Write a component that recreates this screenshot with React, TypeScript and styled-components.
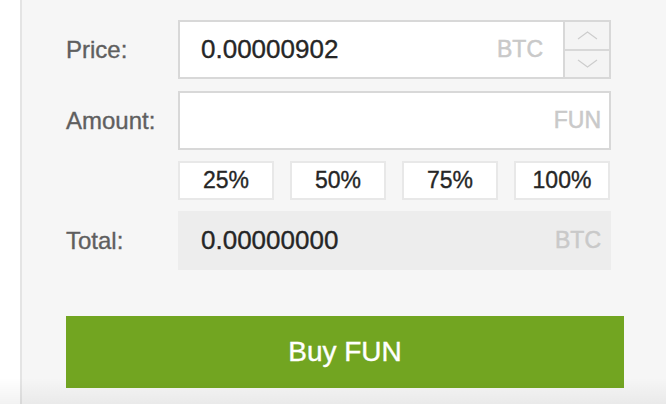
import React from "react";
import styled, { createGlobalStyle } from "styled-components";

const Global = createGlobalStyle`
  html, body { margin: 0; padding: 0; background: #ffffff; }
  body { font-family: "Liberation Sans", Arial, sans-serif; overflow: hidden; }
  * { box-sizing: border-box; }
`;

const Page = styled.div`
  display: flex;
  height: 404px;
  position: relative;
  &::after {
    content: "";
    position: absolute;
    left: 0;
    right: 0;
    bottom: 0;
    height: 26px;
    background: linear-gradient(to bottom, rgba(0,0,0,0), rgba(0,0,0,0.05));
    pointer-events: none;
  }
`;

const Gutter = styled.div`
  width: 20px;
  flex: none;
  background: #ffffff;
`;

const Panel = styled.div`
  flex: 1;
  background: #f6f6f6;
  border-left: 2px solid #e4e4e4;
  padding: 20px 42px 0 44px;
  display: flex;
  flex-direction: column;
`;

const Row = styled.div<{ $gap?: number }>`
  display: grid;
  grid-template-columns: 112px 433px;
  align-items: center;
  margin-bottom: ${(p) => p.$gap ?? 11}px;
`;

const Label = styled.div`
  font-size: 24px;
  color: #5f5f5f;
  -webkit-text-stroke: 0.35px currentColor;
`;

const Field = styled.div<{ $filled?: boolean }>`
  height: 59px;
  display: flex;
  align-items: stretch;
  background: ${(p) => (p.$filled ? "#ededed" : "#ffffff")};
  border: ${(p) => (p.$filled ? "none" : "2px solid #d8d8d8")};
`;

const Value = styled.div<{ $pad: number; $left: number }>`
  flex: 1;
  display: flex;
  align-items: center;
  justify-content: space-between;
  padding: 0 ${(p) => p.$pad}px 0 ${(p) => p.$left}px;
`;

const Num = styled.span`
  font-size: 26px;
  color: #262626;
  -webkit-text-stroke: 0.35px currentColor;
`;

const Unit = styled.span`
  font-size: 23px;
  color: #c9c9c9;
  -webkit-text-stroke: 0.5px currentColor;
`;

const Spinner = styled.div`
  width: 46px;
  flex: none;
  display: flex;
  flex-direction: column;
  border-left: 2px solid #d8d8d8;
  background: #f4f4f4;
`;

const SpinBtn = styled.div<{ $top?: boolean }>`
  flex: 1;
  display: flex;
  align-items: center;
  justify-content: center;
  border-bottom: ${(p) => (p.$top ? "2px solid #d8d8d8" : "none")};
`;

const Percents = styled.div`
  grid-column: 2;
  display: grid;
  grid-template-columns: repeat(4, 96px);
  gap: 16px;
`;

const PctBtn = styled.div`
  height: 39px;
  background: #ffffff;
  border: 2px solid #e8e8e8;
  display: flex;
  align-items: center;
  justify-content: center;
  font-size: 23px;
  color: #262626;
  -webkit-text-stroke: 0.35px currentColor;
`;

const BuyButton = styled.div`
  margin-top: 46px;
  height: 72px;
  background: #72a521;
  color: #ffffff;
  font-size: 28px;
  -webkit-text-stroke: 0.4px currentColor;
  display: flex;
  align-items: center;
  justify-content: center;
`;

const Chevron = ({ up }: { up?: boolean }) => (
  <svg width="21" height="9" viewBox="0 0 21 9">
    <polyline
      points={up ? "1,8 10.5,1 20,8" : "1,1 10.5,8 20,1"}
      fill="none"
      stroke="#cdcdcd"
      strokeWidth="1.2"
    />
  </svg>
);

export default function App() {
  return (
    <>
      <Global />
      <Page>
        <Gutter />
        <Panel>
          <Row $gap={12}>
            <Label>Price:</Label>
            <Field>
              <Value $pad={20} $left={21}>
                <Num>0.00000902</Num>
                <Unit>BTC</Unit>
              </Value>
              <Spinner>
                <SpinBtn $top>
                  <Chevron up />
                </SpinBtn>
                <SpinBtn>
                  <Chevron />
                </SpinBtn>
              </Spinner>
            </Field>
          </Row>
          <Row>
            <Label>Amount:</Label>
            <Field>
              <Value $pad={8} $left={21}>
                <Num />
                <Unit>FUN</Unit>
              </Value>
            </Field>
          </Row>
          <Row>
            <Percents>
              <PctBtn>25%</PctBtn>
              <PctBtn>50%</PctBtn>
              <PctBtn>75%</PctBtn>
              <PctBtn>100%</PctBtn>
            </Percents>
          </Row>
          <Row $gap={0}>
            <Label>Total:</Label>
            <Field $filled>
              <Value $pad={10} $left={23}>
                <Num>0.00000000</Num>
                <Unit>BTC</Unit>
              </Value>
            </Field>
          </Row>
          <BuyButton>Buy FUN</BuyButton>
        </Panel>
      </Page>
    </>
  );
}
